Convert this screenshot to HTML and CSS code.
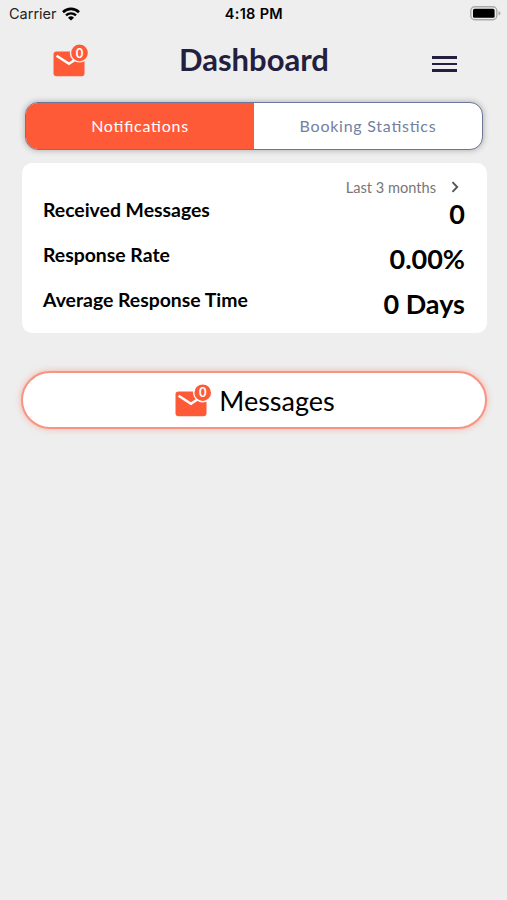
FILE: index.html
```html
<!DOCTYPE html>
<html lang="en">
<head>
  <meta charset="utf-8">
  <title>Dashboard</title>
  <link rel="stylesheet" href="styles.css">
</head>
<body>
  <div class="status-bar">
    <div class="carrier">
      <span>Carrier</span>
      <svg class="wifi" width="18" height="14" viewBox="0 0 18 14">
        <path d="M1 5.2a11.4 11.4 0 0 1 16 0" fill="none" stroke="#000" stroke-width="2.6"/>
        <path d="M4 8.4a7.1 7.1 0 0 1 10 0" fill="none" stroke="#000" stroke-width="2.4"/>
        <path d="M9 13.6L6 10.7a4.3 4.3 0 0 1 6 0z"/>
      </svg>
    </div>
    <div class="time">4:18 PM</div>
    <svg class="battery" width="31" height="15" viewBox="0 0 31 15">
      <rect x=".8" y=".8" width="26" height="13" rx="4" fill="#eee" stroke="#aaa" stroke-width="1.4"/>
      <rect x="3" y="2.8" width="21.6" height="9" rx="1.6"/>
      <path d="M28.5 5v4.6q2-.8 2-2.3t-2-2.3z" fill="#aaa"/>
    </svg>
  </div>

  <header class="header">
    <svg class="mail-icon" width="37" height="34" viewBox="0 0 37 34">
      <rect x=".5" y="8.4" width="31" height="24.8" rx="3"/>
      <path class="flap" d="M3.6 12.8l12.4 8 12-8"/>
      <circle class="badge" cx="26.5" cy="9.9" r="9"/>
      <text x="26.5" y="14.6">0</text>
    </svg>
    <h1>Dashboard</h1>
    <div class="menu">
      <span></span>
      <span></span>
      <span></span>
    </div>
  </header>

  <div class="tabs">
    <div class="tab active">Notifications</div>
    <div class="tab">Booking Statistics</div>
  </div>

  <div class="card">
    <div class="period">
      <span>Last 3 months</span>
      <svg width="8" height="12" viewBox="0 0 8 12">
        <path d="M1.5 1.2L6.2 6l-4.7 4.8"/>
      </svg>
    </div>
    <div class="stat">
      <div class="label">Received Messages</div>
      <div class="value">0</div>
    </div>
    <div class="stat">
      <div class="label">Response Rate</div>
      <div class="value">0.00%</div>
    </div>
    <div class="stat">
      <div class="label">Average Response Time</div>
      <div class="value">0 Days</div>
    </div>
  </div>

  <div class="messages-btn">
    <svg class="mail-icon" width="37" height="34" viewBox="0 0 37 34">
      <rect x=".5" y="8.4" width="31" height="24.8" rx="3"/>
      <path class="flap" d="M3.6 12.8l12.4 8 12-8"/>
      <circle class="badge" cx="27.7" cy="9.7" r="9"/>
      <text x="27.7" y="14.4">0</text>
    </svg>
    <span>Messages</span>
  </div>
</body>
</html>
```

FILE: styles.css
```css
* {
  margin: 0;
  padding: 0;
  box-sizing: border-box;
}

body {
  font-family: Lato, sans-serif;
  background: #eeeeee;
  color: #000;
  width: 507px;
  height: 900px;
  overflow: hidden;
}

/* Status bar */
.status-bar {
  display: flex;
  align-items: center;
  height: 27px;
  padding: 0 6px 0 9px;
  font-family: Inter, sans-serif;
  font-size: 14.5px;
}

.carrier {
  flex: 1;
  display: flex;
  align-items: center;
  gap: 5px;
  color: #222;
}

.time {
  font-weight: 600;
  letter-spacing: 0.3px;
  margin-right: 187px;
}

/* Header */
.header {
  display: flex;
  align-items: flex-start;
  justify-content: space-between;
  height: 75px;
  padding: 16px 50px 0 53px;
}

.header h1 {
  color: #23203f;
  font-size: 31px;
  line-height: 36px;
  font-weight: 700;
  margin: -2px 14px 0 0;
}

.mail-icon rect {
  fill: #ff5a38;
}

.mail-icon .flap {
  fill: none;
  stroke: #fff;
  stroke-width: 2.5;
}

.mail-icon .badge {
  fill: #ff5a38;
  stroke: #eee;
  stroke-width: 1.4;
}

.mail-icon text {
  fill: #fff;
  font-size: 13px;
  font-weight: 700;
  text-anchor: middle;
}

.menu {
  display: flex;
  flex-direction: column;
  gap: 4px;
  padding-top: 13px;
}

.menu span {
  width: 25px;
  height: 2.6px;
  background: #23203f;
}

/* Tabs */
.tabs {
  display: flex;
  height: 48px;
  margin: 0 24px 0 25px;
  border: 1px solid #6b7796;
  border-radius: 13px;
  background: #fff;
  box-shadow: 0 0 6px rgba(0, 0, 0, 0.3);
  overflow: hidden;
}

.tab {
  flex: 1;
  display: flex;
  align-items: center;
  justify-content: center;
  padding-bottom: 1px;
  color: #7480a0;
  font-size: 16px;
  letter-spacing: 0.75px;
  font-feature-settings: "liga" 1;
}

.tab.active {
  background: #ff5a38;
  color: #fff;
}

/* Stats card */
.card {
  height: 170px;
  margin: 13px 20px 0 22px;
  padding: 15px 22px 0 21px;
  background: #fff;
  border-radius: 10px;
}

.period {
  display: flex;
  align-items: center;
  justify-content: flex-end;
  gap: 15px;
  height: 18px;
  padding-right: 6px;
  color: #777;
  font-size: 14.6px;
}

.period path {
  fill: none;
  stroke: #555;
  stroke-width: 1.9;
}

.stat {
  display: flex;
  justify-content: space-between;
  height: 45px;
}

.label {
  font-size: 19.4px;
  line-height: 27px;
  font-weight: 700;
}

.value {
  font-size: 27px;
  line-height: 36px;
  font-weight: 700;
}

/* Messages button */
.messages-btn {
  display: flex;
  align-items: center;
  justify-content: center;
  gap: 7px;
  height: 58px;
  margin: 38px 20px 0 21px;
  padding-left: 2px;
  background: #fff;
  border: 2px solid #f79483;
  border-radius: 29px;
  box-shadow: 0 0 6px rgba(255, 90, 56, 0.4);
  font-size: 27px;
}

.messages-btn .badge {
  stroke: #fff;
}
```
